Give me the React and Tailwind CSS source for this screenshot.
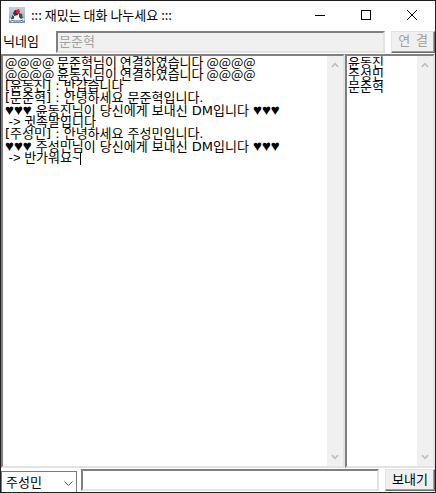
import React from "react";

const hearts = <span className="font-['Liberation_Sans','DejaVu_Sans',sans-serif] text-[15px]">♥♥♥</span>;

const notice = "font-['Noto_Sans_CJK_KR',sans-serif]";
const chat = "font-['DejaVu_Sans','Noto_Sans_CJK_KR',sans-serif]";
const whisper = "font-['Liberation_Sans','Noto_Sans_CJK_KR',sans-serif]";

const messages = [
  { font: notice, text: "@@@@ 문준혁님이 연결하였습니다 @@@@" },
  { font: notice, text: "@@@@ 윤동진님이 연결하였습니다 @@@@" },
  { font: chat, text: "[윤동진] : 반갑습니다" },
  { font: chat, text: "[문준혁] : 안녕하세요 문준혁입니다." },
  { font: chat, text: <>{hearts} 윤동진님이 당신에게 보내신 DM입니다 {hearts}</> },
  { font: whisper, text: " -> 귓속말입니다" },
  { font: chat, text: "[주성민] : 안녕하세요 주성민입니다." },
  { font: chat, text: <>{hearts} 주성민님이 당신에게 보내신 DM입니다 {hearts}</> },
  { font: whisper, text: " -> 반가워요~" },
];

const users = ["윤동진", "주성민", "문준혁"];

function JavaIcon() {
  return (
    <svg viewBox="0 0 16 16" className="size-4" aria-hidden="true">
      <defs>
        <linearGradient id="tile" x1="0" y1="0" x2="0" y2="1">
          <stop offset="0" stopColor="#c3d3e2" />
          <stop offset="0.6" stopColor="#a3b8cb" />
          <stop offset="1" stopColor="#6f8da8" />
        </linearGradient>
      </defs>
      <rect width="16" height="16" fill="url(#tile)" />
      <path d="M2 9l3-2h6l3 2v4H2z" fill="#eef1f4" />
      <path d="M0 12l3-1h10l3 1-3 3H3z" fill="#f7f9fa" />
      <path d="M4 6l2-3h3l1 2-1 3-4 1z" fill="#33363b" />
      <path d="M10 6l3 1 1 4-2 1-2-2z" fill="#45494e" />
      <path d="M3 8l2 1v3H2z" fill="#45494e" />
      <path d="M7 3l3-1 1 3-2 2-2-1z" fill="#e0202a" />
      <path d="M2 13l3 1h6l3-1" fill="none" stroke="#4c5f70" strokeWidth="1" />
    </svg>
  );
}

function Chevron({ up = false, className }) {
  return (
    <svg viewBox="0 0 9 6" className={className} aria-hidden="true">
      <path d={up ? "M1 5l3.5-3.5L8 5" : "M1 1l3.5 3.5L8 1"} fill="none" stroke="currentColor" strokeWidth="2" />
    </svg>
  );
}

function ScrollBar() {
  return (
    <div className="flex w-4 shrink-0 flex-col items-center justify-between bg-[#f0f0f0] py-1.5 text-[#bfbfbf]">
      <button type="button" disabled aria-label="위로 스크롤">
        <Chevron up className="h-1.5 w-2" />
      </button>
      <button type="button" disabled aria-label="아래로 스크롤">
        <Chevron className="h-1.5 w-2" />
      </button>
    </div>
  );
}

const sunken = "border-2 border-t-[#808080] border-l-[#808080] border-r-[#e3e3e3] border-b-[#e3e3e3]";
const raised =
  "border border-t-[#e3e3e3] border-l-[#e3e3e3] border-r-[#696969] border-b-[#696969] bg-[#f0f0f0] shadow-[inset_-1px_-1px_0_#a0a0a0]";

export default function App() {
  return (
    <main className="flex h-screen flex-col overflow-hidden border border-[#202020] bg-white font-['Noto_Sans_CJK_KR',sans-serif] text-[13px] leading-3 text-black">
      <header className="flex h-7 shrink-0 items-center pl-2">
        <JavaIcon />
        <h1 className="ml-1.5 flex-1 text-[13px] leading-4">::: 재밌는 대화 나누세요 :::</h1>
        <div className="flex h-full">
          <button type="button" aria-label="최소화" className="flex w-[46px] items-center justify-center">
            <svg viewBox="0 0 10 10" className="size-2.5" aria-hidden="true">
              <path d="M0 5.5h10" stroke="#000" />
            </svg>
          </button>
          <button type="button" aria-label="최대화" className="flex w-[46px] items-center justify-center">
            <svg viewBox="0 0 10 10" className="size-2.5" aria-hidden="true">
              <rect x=".5" y=".5" width="9" height="9" fill="none" stroke="#000" />
            </svg>
          </button>
          <button type="button" aria-label="닫기" className="flex w-[46px] items-center justify-center">
            <svg viewBox="0 0 10 10" className="size-2.5" aria-hidden="true">
              <path d="M0 0l10 10M10 0L0 10" stroke="#000" />
            </svg>
          </button>
        </div>
      </header>

      <form className="mt-0.5 mb-px flex h-[22px] shrink-0 items-stretch" onSubmit={(e) => e.preventDefault()}>
        <label htmlFor="nickname" className="w-[55px] shrink-0 pl-0.5 leading-5">
          닉네임
        </label>
        <input
          id="nickname"
          disabled
          defaultValue="문준혁"
          className={`min-w-0 flex-1 bg-[#f0f0f0] pb-1 pl-px leading-3 text-[#a0a0a0] ${sunken}`}
        />
        <button type="submit" disabled className={`ml-1.5 w-11 shrink-0 pb-1 text-[#a0a0a0] ${raised}`}>
          연&nbsp; 결
        </button>
      </form>

      <section className="flex min-h-0 flex-1">
        <div className={`flex min-w-0 flex-1 ${sunken}`}>
          <div
            role="textbox"
            aria-multiline="true"
            aria-readonly="true"
            aria-label="대화 내용"
            tabIndex={0}
            className="min-w-0 flex-1 pl-0.5 outline-none"
          >
            {messages.map(({ font, text }, i) => (
              <p key={i} className={`h-3 whitespace-pre ${font}`}>
                {text}
                {i === messages.length - 1 && <span className="inline-block h-3 w-px bg-black align-middle" />}
              </p>
            ))}
          </div>
          <ScrollBar />
        </div>
        <div className={`flex w-[90px] shrink-0 ${sunken}`}>
          <textarea
            readOnly
            aria-label="접속자"
            value={users.join("\n")}
            className="min-w-0 flex-1 resize-none overflow-hidden pl-px outline-none"
          />
          <ScrollBar />
        </div>
      </section>

      <form className="mt-px flex h-[23px] shrink-0 items-start" onSubmit={(e) => e.preventDefault()}>
        <div className="relative mt-0.5 w-[76px] shrink-0">
          <select
            aria-label="받는 사람"
            defaultValue="주성민"
            className="h-[22px] w-full appearance-none border border-[#7a7a7a] bg-white pl-1 leading-5"
          >
            {users.map((user) => (
              <option key={user}>{user}</option>
            ))}
          </select>
          <svg viewBox="0 0 9 6" className="pointer-events-none absolute top-2.5 right-1 h-1.5 w-[9px]" aria-hidden="true">
            <path d="M.5 .5l4 4 4-4" fill="none" stroke="#555" />
          </svg>
        </div>
        <input aria-label="메시지" className={`ml-1 h-[22px] min-w-0 flex-1 bg-white px-px outline-none ${sunken}`} />
        <button type="submit" className={`ml-1.5 h-[22px] w-[50px] shrink-0 pb-0.5 ${raised}`}>
          보내기
        </button>
      </form>
    </main>
  );
}
